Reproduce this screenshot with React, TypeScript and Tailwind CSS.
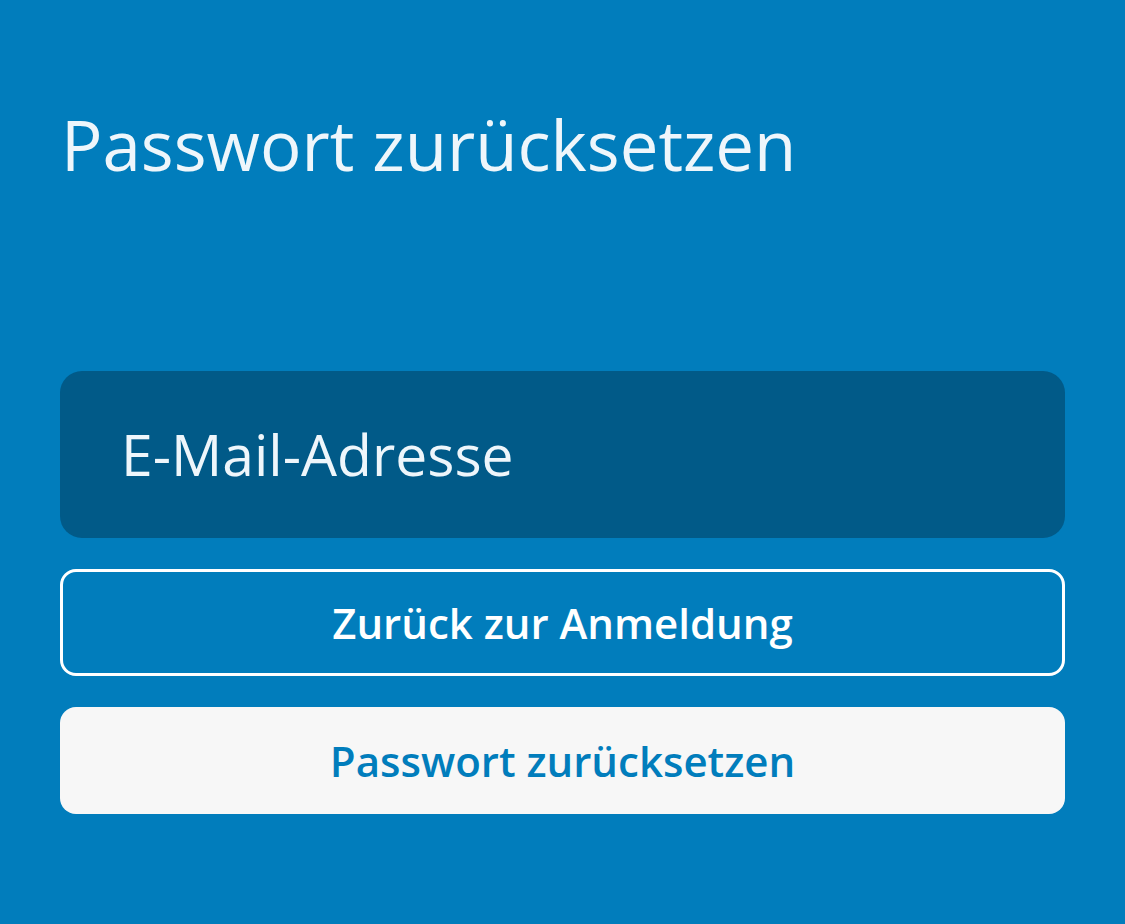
import React from "react";

export default function App() {
  return (
    <div
      className="w-[1125px] h-[924px] bg-[#017dbc] px-[60px] pt-[104px] overflow-hidden"
      style={{ fontFamily: '"Open Sans", "Noto Sans", sans-serif' }}
    >
      <h1 className="text-[69px] leading-[80px] font-normal text-[#eef6fb] pl-[1px]">
        Passwort zurücksetzen
      </h1>
      <div className="mt-[187px] h-[167px] rounded-[22px] bg-[#015a88] flex items-center pl-[61px]">
        <span className="text-[57px] font-normal text-[#eef6fb] leading-none">E-Mail-Adresse</span>
      </div>
      <button className="mt-[31px] w-full h-[107px] rounded-[16px] border-[3px] border-white flex items-center justify-center text-[42px] font-semibold text-white">
        Zurück zur Anmeldung
      </button>
      <button className="mt-[31px] w-full h-[107px] rounded-[16px] bg-[#f7f7f7] flex items-center justify-center text-[42px] font-semibold text-[#017dbc]">
        Passwort zurücksetzen
      </button>
    </div>
  );
}
